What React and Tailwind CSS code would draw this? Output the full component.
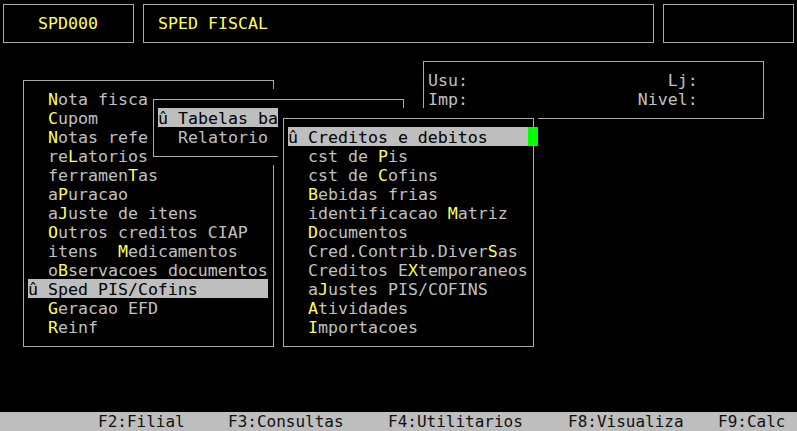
import React from "react";

const CW = 10;
const RH = 19;
const X0 = -2;
const Y0 = -6;

function Win({ c0, r0, c1, r1, children }) {
  return (
    <div
      className="absolute bg-black"
      style={{
        left: X0 + CW * c0,
        top: Y0 + RH * r0,
        width: CW * (c1 - c0 + 1),
        height: RH * (r1 - r0 + 1),
      }}
    >
      <div className="flex flex-col items-start pl-[10px] pt-[19px]">{children}</div>
      <div className="pointer-events-none absolute left-[5px] top-[10px] right-[4px] bottom-[8px] border border-[#a9a9a9]" />
    </div>
  );
}

function Line({ t = "", hl = false, cls = "", yellow = false }) {
  const parts = t.split(/\[(.)\]/);
  const color = hl
    ? "bg-[#bebebe] text-black"
    : yellow
    ? "text-[#ffff55]"
    : "text-[#c0c0c0]";
  return (
    <div className={`h-[19px] leading-[19px] whitespace-pre ${color} ${cls}`}>
      <span className="relative top-px">
        {parts.map((p, i) =>
          i % 2 ? (
            <span key={i} className={hl ? "" : "text-[#ffff55]"}>
              {p}
            </span>
          ) : (
            <React.Fragment key={i}>{p}</React.Fragment>
          )
        )}
      </span>
    </div>
  );
}

export default function App() {
  return (
    <div className="w-[797px] h-[431px] bg-black flex flex-col overflow-hidden font-['DejaVu_Sans_Mono','Liberation_Mono',monospace] text-[16.6px]">
      <div className="relative flex-1">
        {/* Top boxes */}
        <Win c0={0} r0={0} c1={13} r1={2}>
          <Line t="   SPD000" yellow />
        </Win>
        <Win c0={14} r0={0} c1={65} r1={2}>
          <Line t=" SPED FISCAL" yellow />
        </Win>
        <Win c0={66} r0={0} c1={79} r1={2} />

        {/* Info box */}
        <Win c0={42} r0={3} c1={76} r1={6}>
          <Line t={"Usu:" + " ".repeat(20) + "Lj:"} />
          <Line t={"Imp:" + " ".repeat(17) + "Nivel:"} />
        </Win>

        {/* Main menu */}
        <Win c0={2} r0={4} c1={27} r1={18}>
          <Line t="  [N]ota fisca" />
          <Line t="  [C]upom" />
          <Line t="  [N]otas refe" />
          <Line t="  re[L]atorios" />
          <Line t="  ferramen[T]as" />
          <Line t="  a[P]uracao" />
          <Line t="  a[J]uste de itens" />
          <Line t="  [O]utros creditos CIAP" />
          <Line t="  itens  [M]edicamentos" />
          <Line t="  o[B]servacoes documentos" />
          <Line t="û Sped PIS/Cofins" hl cls="w-[240px]" />
          <Line t="  [G]eracao EFD" />
          <Line t="  [R]einf" />
        </Win>

        {/* Tabelas submenu */}
        <Win c0={15} r0={5} c1={40} r1={8}>
          <Line t="û Tabelas ba" hl cls="w-[240px]" />
          <Line t="  Relatorio" />
        </Win>

        {/* Creditos submenu */}
        <Win c0={28} r0={6} c1={53} r1={18}>
          <Line t="û Creditos e debitos" hl cls="w-[240px]" />
          <Line t="  cst de [P]is" />
          <Line t="  cst de [C]ofins" />
          <Line t="  [B]ebidas frias" />
          <Line t="  identificacao [M]atriz" />
          <Line t="  [D]ocumentos" />
          <Line t="  Cred.Contrib.Diver[S]as" />
          <Line t="  Creditos E[X]temporaneos" />
          <Line t="  a[J]ustes PIS/COFINS" />
          <Line t="  [A]tividades" />
          <Line t="  [I]mportacoes" />
          <div className="absolute left-[250px] top-[19px] w-[10px] h-[19px] bg-[#00ff00]" />
        </Win>
      </div>

      {/* Bottom function key bar */}
      <div className="h-[19px] shrink-0 bg-[#bebebe] text-[#111] flex items-center pl-[98px] text-[16px] leading-[19px] whitespace-pre">
        <span className="w-[130px] shrink-0">F2:Filial</span>
        <span className="w-[160px] shrink-0">F3:Consultas</span>
        <span className="w-[180px] shrink-0">F4:Utilitarios</span>
        <span className="w-[150px] shrink-0">F8:Visualiza</span>
        <span className="shrink-0">F9:Calc</span>
      </div>
    </div>
  );
}
